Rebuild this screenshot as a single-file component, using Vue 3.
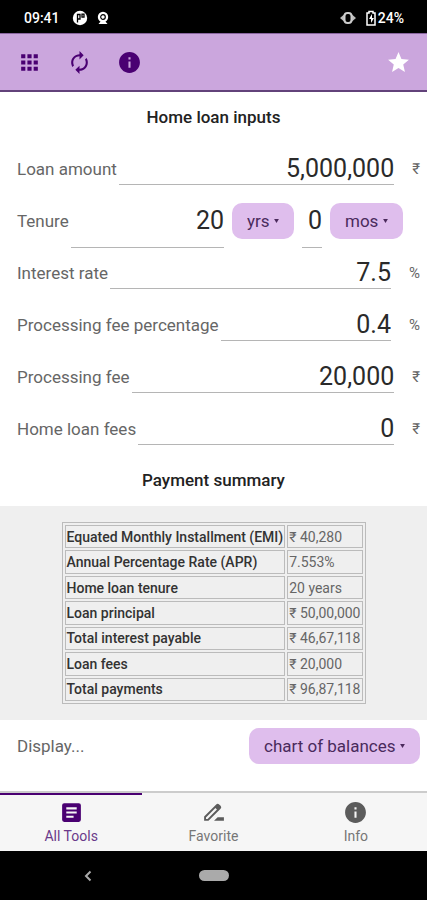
<template>
  <div class="app">
    <div class="status-bar">
      <span class="status-time">{{ time }}</span>
      <svg class="status-icon" viewBox="0 0 16 16" aria-hidden="true">
        <circle cx="8" cy="8" r="7.200" fill="#fff" />
        <path d="M5.500 12.500V4.500H8v4.500H5.500M10 4.200h2v3h-2z" fill="none" stroke="#000" stroke-width="1.300" />
      </svg>
      <svg class="status-icon" viewBox="0 0 16 16" aria-hidden="true">
        <circle cx="8" cy="7" r="5.200" fill="#fff" />
        <circle cx="8" cy="7" r="2.300" fill="none" stroke="#000" stroke-width="1.200" />
        <path d="M3.500 14l2.500-3h4l2.500 3z" fill="#fff" />
      </svg>
      <span class="spacer"></span>
      <svg class="status-icon" viewBox="0 0 16 16" aria-hidden="true">
        <path d="M4 4.500L0 8l4 3.500zM12 4.500L16 8l-4 3.500z" fill="#bbb" />
        <rect x="4.500" y="3" width="7" height="10" rx="3" fill="#000" stroke="#ccc" stroke-width="2" />
      </svg>
      <svg class="battery" viewBox="0 0 10 16" aria-hidden="true">
        <path d="M3 1.500h4V3h2v12H1V3h2z" fill="none" stroke="#fff" stroke-width="1.500" />
        <path d="M6 4L3 9h2v4l3-5H6z" fill="#fff" />
      </svg>
      <span class="status-battery">24%</span>
    </div>

    <header class="toolbar">
      <button class="tool" aria-label="Menu">
        <svg viewBox="0 0 24 24">
          <path d="M4 4h4v4H4zM10 4h4v4h-4zM16 4h4v4h-4zM4 10h4v4H4zM10 10h4v4h-4zM16 10h4v4h-4zM4 16h4v4H4zM10 16h4v4h-4zM16 16h4v4h-4z" />
        </svg>
      </button>
      <button class="tool" aria-label="Reset">
        <svg viewBox="0 0 24 24">
          <path d="M12 6v3l4-4-4-4v3c-4.420 0-8 3.580-8 8 0 1.570.46 3.030 1.240 4.260L6.700 14.800A5.870 5.870 0 0 1 6 12c0-3.310 2.690-6 6-6zm6.760 1.740L17.300 9.200c.44.840.7 1.790.7 2.800 0 3.310-2.690 6-6 6v-3l-4 4 4 4v-3c4.420 0 8-3.580 8-8 0-1.570-.46-3.030-1.240-4.260z" />
        </svg>
      </button>
      <button class="tool" aria-label="Information">
        <svg viewBox="0 0 24 24"><path :d="infoPath" /></svg>
      </button>
      <span class="spacer"></span>
      <button class="tool star" :aria-pressed="starred" aria-label="Favorite tool" @click="starred = !starred">
        <svg viewBox="0 0 24 24">
          <path d="M12 17.270L18.180 21l-1.640-7.030L22 9.240l-7.190-.61L12 2 9.190 8.630 2 9.240l5.460 4.730L5.820 21z" />
        </svg>
      </button>
    </header>

    <main class="content">
      <h2 class="section-title">Home loan inputs</h2>
      <form @submit.prevent>
        <div v-for="field in fields" :key="field.id" class="row">
          <label :for="field.id">{{ field.label }}</label>
          <input :id="field.id" v-model="field.value" class="value" type="text" inputmode="decimal">
          <template v-if="field.id === 'tenure'">
            <span class="picker">
              <select v-model="yearUnit" aria-label="Tenure unit">
                <option>yrs</option>
              </select>
              <svg class="caret" viewBox="0 0 6 5"><path d="M0 0h6L3 5z" /></svg>
            </span>
            <input v-model="months" class="value months" type="text" inputmode="numeric" aria-label="Extra months">
            <span class="picker last">
              <select v-model="monthUnit" aria-label="Extra tenure unit">
                <option>mos</option>
              </select>
              <svg class="caret" viewBox="0 0 6 5"><path d="M0 0h6L3 5z" /></svg>
            </span>
          </template>
          <span v-else class="unit">{{ field.unit }}</span>
        </div>
      </form>

      <h2 class="section-title">Payment summary</h2>
      <div class="summary">
        <table>
          <tbody>
            <tr v-for="item in summary" :key="item.label">
              <th scope="row">{{ item.label }}</th>
              <td>{{ item.value }}</td>
            </tr>
          </tbody>
        </table>
      </div>

      <div class="row display">
        <label for="display">Display...</label>
        <span class="picker">
          <select id="display" v-model="display">
            <option>chart of balances</option>
          </select>
          <svg class="caret" viewBox="0 0 6 5"><path d="M0 0h6L3 5z" /></svg>
        </span>
      </div>
    </main>

    <nav class="tabs">
      <a
        v-for="tab in tabs"
        :key="tab.label"
        href="#"
        class="tab"
        :class="{ active: tab.label === activeTab }"
        @click.prevent="activeTab = tab.label"
      >
        <svg viewBox="0 0 24 24"><path :d="tab.icon" fill-rule="evenodd" /></svg>
        <span>{{ tab.label }}</span>
      </a>
    </nav>

    <div class="system-nav">
      <button aria-label="Back">
        <svg class="back" viewBox="0 0 8 12"><path d="M6.500 1.500L2 6l4.500 4.500" /></svg>
      </button>
      <button aria-label="Home"><span class="pill"></span></button>
      <span></span>
    </div>
  </div>
</template>

<script setup>
import { ref } from 'vue'

const infoPath = 'M12 2C6.480 2 2 6.480 2 12s4.480 10 10 10 10-4.480 10-10S17.520 2 12 2zm1 15h-2v-6h2v6zm0-8h-2V7h2v2z'

const time = '09:41'
const starred = ref(true)
const yearUnit = ref('yrs')
const monthUnit = ref('mos')
const months = ref('0')
const display = ref('chart of balances')
const activeTab = ref('All Tools')

const fields = ref([
  { id: 'amount', label: 'Loan amount', value: '5,000,000', unit: '₹' },
  { id: 'tenure', label: 'Tenure', value: '20' },
  { id: 'rate', label: 'Interest rate', value: '7.5', unit: '%' },
  { id: 'fee-percentage', label: 'Processing fee percentage', value: '0.4', unit: '%' },
  { id: 'fee', label: 'Processing fee', value: '20,000', unit: '₹' },
  { id: 'loan-fees', label: 'Home loan fees', value: '0', unit: '₹' }
])

const summary = [
  { label: 'Equated Monthly Installment (EMI)', value: '₹ 40,280' },
  { label: 'Annual Percentage Rate (APR)', value: '7.553%' },
  { label: 'Home loan tenure', value: '20 years' },
  { label: 'Loan principal', value: '₹ 50,00,000' },
  { label: 'Total interest payable', value: '₹ 46,67,118' },
  { label: 'Loan fees', value: '₹ 20,000' },
  { label: 'Total payments', value: '₹ 96,87,118' }
]

const tabs = [
  {
    label: 'All Tools',
    icon: 'M19 3H5a2 2 0 0 0-2 2v14a2 2 0 0 0 2 2h14a2 2 0 0 0 2-2V5a2 2 0 0 0-2-2zm-5 14H7v-2h7v2zm3-4H7v-2h10v2zm0-4H7V7h10v2z'
  },
  {
    label: 'Favorite',
    icon: 'M14.600 4.200a2 2 0 0 1 2.800 0l1.400 1.400a2 2 0 0 1 0 2.800L7.200 20H3v-4.200zM4.800 16.700v1.500h1.500L15.300 9.200l-1.500-1.500zM12.500 20l3.500-3.500h6V20z'
  },
  { label: 'Info', icon: infoPath }
]
</script>

<style>
body {
  margin: 0;
  background: #fff;
}
</style>

<style scoped>
.app {
  display: flex;
  flex-direction: column;
  min-height: 100vh;
  font-family: Roboto, "Noto Sans", sans-serif;
  font-size: 17px;
  color: #666;
}

.app * {
  box-sizing: border-box;
}

button,
input,
select {
  margin: 0;
  padding: 0;
  border: none;
  border-radius: 0;
  background: none;
  font: inherit;
  color: inherit;
}

.spacer {
  flex: 1;
}

/* Status bar */
.status-bar {
  display: flex;
  align-items: center;
  height: 33px;
  padding: 2px 23px 0 24px;
  background: #000;
  color: #fff;
  font-size: 14px;
  font-weight: 500;
}

.status-icon {
  width: 16px;
  height: 16px;
  margin-left: 7px;
}

.status-time + .status-icon {
  margin-left: 12px;
}

.battery {
  width: 10px;
  height: 16px;
  margin: 0 2px 0 10px;
}

/* Toolbar */
.toolbar {
  display: flex;
  align-items: center;
  height: 59px;
  padding: 0 16px 0 17px;
  gap: 25px;
  background: #cba6dd;
  border-top: 1px solid #8a66a0;
  border-bottom: 2px solid #62427a;
}

.tool {
  display: flex;
  color: #4a0072;
}

.tool svg {
  width: 25px;
  height: 25px;
  fill: currentColor;
}

.tool.star {
  color: #fff;
}

/* Inputs */
.content {
  flex: 1;
}

.section-title {
  margin: 0;
  font-size: 17px;
  font-weight: 500;
  line-height: 51px;
  text-align: center;
  color: #222;
}

.row {
  display: flex;
  align-items: center;
  height: 52px;
  padding: 0 7px 0 17px;
}

.row label {
  margin-right: 2px;
}

.value {
  flex: 1;
  min-width: 0;
  height: 32px;
  border-bottom: 1px solid #b5b5b5;
  outline: none;
  font-size: 25px;
  text-align: right;
  color: #2a2a2a;
}

#tenure,
.months {
  height: 54px;
}

.months {
  flex: none;
  width: 20px;
  margin-left: 8px;
}

.unit {
  margin-left: 18px;
  font-size: 15px;
}

.picker {
  display: grid;
  align-items: center;
  margin-left: 8px;
}

.picker.last {
  margin-right: 17px;
}

.picker select {
  grid-area: 1 / 1;
  height: 36px;
  padding: 0 24px 0 15px;
  border-radius: 10px;
  background: #dfbeed;
  color: #4a2a5c;
  appearance: none;
}

.caret {
  grid-area: 1 / 1;
  justify-self: end;
  width: 5px;
  height: 4px;
  margin-right: 15px;
  fill: #4a2a5c;
  pointer-events: none;
}

/* Payment summary */
.summary {
  padding: 16px 0;
  background: #efefef;
}

table {
  height: 182px;
  margin: 0 auto;
  border: 1px solid #bbb;
  border-spacing: 2px;
  font-size: 14px;
  line-height: 18px;
}

th,
td {
  padding: 1px;
  border: 1px solid #bbb;
  text-align: left;
  white-space: nowrap;
}

th {
  font-weight: 500;
  color: #333;
}

.display {
  justify-content: space-between;
  margin-bottom: 19px;
}

/* Bottom tabs */
.tabs {
  display: grid;
  grid-template-columns: repeat(3, 1fr);
  height: 60px;
  border-top: 2px solid #ccc;
  background: #f6f6f6;
}

.tab {
  display: flex;
  flex-direction: column;
  align-items: center;
  padding-top: 5px;
  border-top: 2px solid transparent;
  font-size: 14px;
  line-height: 22px;
  text-decoration: none;
  color: #777;
}

.tab svg {
  width: 25px;
  height: 25px;
  fill: #5c5c5c;
}

.tab.active {
  border-top-color: #4a0072;
  color: #6a3a8a;
}

.tab.active svg {
  fill: #4a0072;
}

/* System navigation */
.system-nav {
  display: flex;
  align-items: center;
  justify-content: space-between;
  height: 49px;
  padding: 0 84px;
  background: #000;
}

.system-nav button {
  display: flex;
}

.system-nav > :first-child,
.system-nav > :last-child {
  width: 8px;
}

.back {
  width: 8px;
  height: 12px;
  fill: none;
  stroke: #aaa;
  stroke-width: 2;
}

.pill {
  width: 30px;
  height: 11px;
  border-radius: 6px;
  background: #aaa;
}
</style>
